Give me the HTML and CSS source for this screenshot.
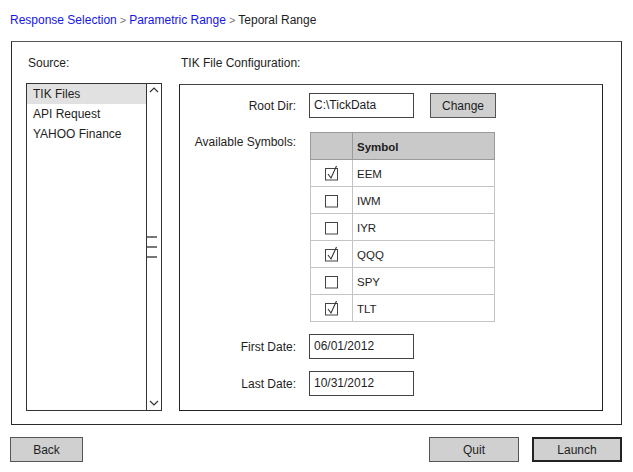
FILE: index.html
```html
<!DOCTYPE html>
<html>
<head>
<meta charset="utf-8">
<link rel="stylesheet" href="styles.css">
</head>
<body>
<div class="page">
  <div class="crumbs">
    <span class="link">Response Selection</span><span class="sep">&gt;</span><span class="link">Parametric Range</span><span class="sep">&gt;</span><span class="current">Teporal Range</span>
  </div>
  <div class="frame">
    <div class="col-left">
      <div class="caption">Source:</div>
      <div class="listbox">
        <ul class="items">
          <li class="item selected">TIK Files</li>
          <li class="item">API Request</li>
          <li class="item">YAHOO Finance</li>
        </ul>
        <div class="scrollbar">
          <svg class="caret" width="14" height="10" viewBox="0 0 14 10"><path d="M3 7 L7 3 L11 7" fill="none" stroke="#333" stroke-width="1.2"/></svg>
          <div class="grip"><span></span><span></span><span></span></div>
          <svg class="caret" width="14" height="10" viewBox="0 0 14 10"><path d="M3 3 L7 7 L11 3" fill="none" stroke="#333" stroke-width="1.2"/></svg>
        </div>
      </div>
    </div>
    <div class="col-right">
      <div class="caption">TIK File Configuration:</div>
      <div class="config">
        <div class="form">
          <label class="lbl mid">Root Dir:</label>
          <div class="field-row">
            <div class="input">C:\TickData</div>
            <div class="btn small">Change</div>
          </div>
          <label class="lbl top">Available Symbols:</label>
          <table class="symbols">
            <thead>
              <tr><th class="c1"></th><th class="c2">Symbol</th></tr>
            </thead>
            <tbody>
              <tr><td class="c1"><svg class="cb" width="16" height="16" viewBox="0 0 16 16"><rect x="1.5" y="3.5" width="12" height="11.5" fill="#fff" stroke="#444"/><path d="M4 9 L7 13 L12.5 1" fill="none" stroke="#333" stroke-width="1.1"/></svg></td><td class="c2">EEM</td></tr>
              <tr><td class="c1"><svg class="cb" width="16" height="16" viewBox="0 0 16 16"><rect x="1.5" y="3.5" width="12" height="11.5" fill="#fff" stroke="#444"/></svg></td><td class="c2">IWM</td></tr>
              <tr><td class="c1"><svg class="cb" width="16" height="16" viewBox="0 0 16 16"><rect x="1.5" y="3.5" width="12" height="11.5" fill="#fff" stroke="#444"/></svg></td><td class="c2">IYR</td></tr>
              <tr><td class="c1"><svg class="cb" width="16" height="16" viewBox="0 0 16 16"><rect x="1.5" y="3.5" width="12" height="11.5" fill="#fff" stroke="#444"/><path d="M4 9 L7 13 L12.5 1" fill="none" stroke="#333" stroke-width="1.1"/></svg></td><td class="c2">QQQ</td></tr>
              <tr><td class="c1"><svg class="cb" width="16" height="16" viewBox="0 0 16 16"><rect x="1.5" y="3.5" width="12" height="11.5" fill="#fff" stroke="#444"/></svg></td><td class="c2">SPY</td></tr>
              <tr><td class="c1"><svg class="cb" width="16" height="16" viewBox="0 0 16 16"><rect x="1.5" y="3.5" width="12" height="11.5" fill="#fff" stroke="#444"/><path d="M4 9 L7 13 L12.5 1" fill="none" stroke="#333" stroke-width="1.1"/></svg></td><td class="c2">TLT</td></tr>
            </tbody>
          </table>
          <label class="lbl mid">First Date:</label>
          <div class="field-row"><div class="input">06/01/2012</div></div>
          <label class="lbl mid">Last Date:</label>
          <div class="field-row"><div class="input">10/31/2012</div></div>
        </div>
      </div>
    </div>
  </div>
  <div class="actions">
    <div class="btn wide back">Back</div>
    <div class="spacer"></div>
    <div class="btn wide">Quit</div>
    <div class="btn wide primary">Launch</div>
  </div>
</div>
</body>
</html>
```

FILE: styles.css
```css
* { box-sizing: border-box; }
html, body { margin: 0; padding: 0; background: #fff; }
body {
  font-family: "Liberation Sans", Arial, sans-serif;
  font-size: 12px;
  color: #1e1e1e;
}
.page {
  width: 633px;
  height: 472px;
  display: flex;
  flex-direction: column;
}
.crumbs {
  height: 41px;
  padding: 13px 0 0 10px;
  font-size: 12px;
  white-space: nowrap;
}
.crumbs .link { color: #1515e6; }
.crumbs .sep { color: #777; margin: 0 3px; font-size: 11px; }
.crumbs .current { color: #1e1e1e; }

.frame {
  margin-left: 11px;
  width: 611px;
  height: 384px;
  border: 1px solid #2a2a2a;
  border-top-color: #555;
  display: flex;
  gap: 17px;
  padding: 0 0 13px 14px;
}
.col-left { width: 136px; display: flex; flex-direction: column; }
.col-right { width: 424px; display: flex; flex-direction: column; }
.caption {
  height: 42px;
  padding: 14px 0 0 2px;
}
.col-left .caption { height: 41px; }

.listbox {
  flex: 1;
  border: 1px solid #333;
  display: flex;
}
.items {
  list-style: none;
  margin: 0;
  padding: 0;
  flex: 1;
}
.item {
  height: 20px;
  line-height: 20px;
  padding-left: 6px;
}
.item.selected { background: #e1e1e1; }
.scrollbar {
  width: 15px;
  border-left: 1px solid #333;
  display: flex;
  flex-direction: column;
  justify-content: space-between;
  padding: 1px 0 2px;
}
.caret { display: block; }
.grip { display: flex; flex-direction: column; gap: 8px; padding-right: 4px; }
.grip span { display: block; height: 2px; background: #777; }

.config {
  flex: 1;
  border: 1px solid #222;
  border-top-color: #444;
  padding: 8px 0 0 0;
}
.form {
  display: grid;
  grid-template-columns: 116px 1fr;
  column-gap: 13px;
  row-gap: 12px;
}
.lbl { text-align: right; color: #1e1e1e; }
.lbl.mid { align-self: center; }
.lbl.top { padding-top: 3px; margin-top: 2px; }
.field-row { display: flex; align-items: center; gap: 16px; }
.input {
  width: 105px;
  height: 25px;
  border: 1px solid #444;
  padding: 0 4px;
  line-height: 23px;
  background: #fff;
}
.btn {
  height: 25px;
  border: 1px solid #555;
  background: #d0d0d0;
  text-align: center;
  line-height: 24px;
}
.btn.small { width: 66px; }

.symbols {
  border-collapse: collapse;
  width: 185px;
  margin: 2px 0 0 1px;
}
.symbols th {
  height: 27px;
  background: #c9c9c9;
  border: 1px solid #9a9a9a;
  text-align: left;
  font-weight: bold;
  font-size: 11.5px;
  padding: 2px 0 0 4px;
}
.symbols td {
  height: 27px;
  border: 1px solid #c4c4c4;
  padding: 1px 0 0 4px;
  font-size: 11.5px;
}
.symbols .c1 { width: 42px; padding: 0; text-align: center; }
.symbols .cb { display: block; margin: 0 auto; }

.actions {
  display: flex;
  padding: 12px 11px 0 10px;
  gap: 13px;
}
.btn.wide { width: 90px; }
.btn.back { width: 73px; }
.spacer { flex: 1; }
.btn.primary { border: 2px solid #222; line-height: 22px; }
```
